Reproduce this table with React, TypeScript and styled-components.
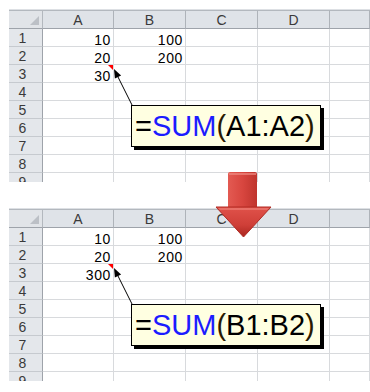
import React from 'react';
import styled, { createGlobalStyle } from 'styled-components';

const GlobalStyle = createGlobalStyle`
  html, body {
    margin: 0;
    padding: 0;
    background: #ffffff;
  }
`

const columns = ['A', 'B', 'C', 'D', ''];
const rowCount = 9;

const Page = styled.div`
  position: relative;
  width: 370px;
  height: 392px;
  overflow: hidden;
  box-sizing: border-box;
  padding: 9px 0 0 9px;
  display: flex;
  flex-direction: column;
  gap: 26px;
  background: #ffffff;
  font-family: "Liberation Sans", Arial, sans-serif;
`

const Sheet = styled.div`
  position: relative;
  height: 172px;
  overflow: hidden;
  border-top: 1px solid #dde0e4;
  display: grid;
  grid-template-columns: 34px 71px 72px 72px 72px 1fr;
  grid-template-rows: 19px;
  grid-auto-rows: 18px;
  background: #ffffff;
`

const Corner = styled.div`
  position: relative;
  box-sizing: border-box;
  background: #e1e4e8;
  border-top: 1px solid #b3b8be;
  border-bottom: 1px solid #9ea3aa;
  border-right: 1px solid #b3b8be;

  &::after {
    content: '';
    position: absolute;
    right: 3px;
    bottom: 3px;
    border-left: 9px solid transparent;
    border-bottom: 9px solid #bcc0c6;
  }
`

const ColHead = styled.div`
  box-sizing: border-box;
  background: #dfe3e8;
  border-top: 1px solid #b3b8be;
  border-bottom: 1px solid #9ea3aa;
  border-right: 1px solid #aeb3b9;
  display: flex;
  align-items: center;
  justify-content: center;
  font-size: 14px;
  color: #3a3a3a;
`

const RowHead = styled.div`
  box-sizing: border-box;
  background: #e4e7eb;
  border-bottom: 1px solid #c6cacf;
  border-right: 1px solid #9ea3aa;
  display: flex;
  align-items: center;
  justify-content: center;
  padding-right: 6px;
  font-size: 14px;
  color: #3a3a3a;
`

const Cell = styled.div<{ $flag?: boolean }>`
  position: relative;
  box-sizing: border-box;
  border-right: 1px solid #d8dadd;
  border-bottom: 1px solid #d8dadd;
  display: flex;
  align-items: flex-end;
  justify-content: flex-end;
  padding-right: 2px;
  font-size: 14px;
  line-height: 11px;
  letter-spacing: 0.6px;
  color: #000000;

  &::after {
    content: '';
    display: ${ ({ $flag }) => $flag ? 'block' : 'none' };
    position: absolute;
    top: 0;
    right: 0;
    border-left: 5px solid transparent;
    border-top: 5px solid #ff0000;
  }
`

const Leader = styled.svg`
  position: absolute;
  left: 0;
  top: 0;
  width: 370px;
  height: 172px;
  pointer-events: none;
`

const Callout = styled.div`
  position: absolute;
  left: 122px;
  top: 95px;
  width: 190px;
  height: 42px;
  box-sizing: border-box;
  border: 1px solid #000000;
  background: #ffffe1;
  box-shadow: 3px 3px 0 #000000;
  display: flex;
  align-items: center;
  padding-left: 3px;
  font-size: 29px;
  color: #000000;
  white-space: nowrap;
`

const Fn = styled.span`
  color: #1c1cff;
`

const Paren = styled.span`
  color: #2a1a00;
`

const BigArrow = styled.svg`
  position: absolute;
  left: 215px;
  top: 172px;
  width: 57px;
  height: 66px;
`

type SheetProps = {
  values: Record<string, string>;
  formula: string;
}

function Spreadsheet ({ values, formula }: SheetProps) {
  const rows = Array.from({ length: rowCount }, (_, i) => i + 1);
  return (
    <Sheet>
      <Corner />
      {columns.map((c, i) => <ColHead key={ 'h' + i }>{ c }</ColHead>)}
      {rows.map(r => (
        <React.Fragment key={ r }>
          <RowHead>{ r }</RowHead>
          {columns.map((c, i) => (
            <Cell key={ i } $flag={ c === 'A' && r === 3 }>
              { values[c + r] }
            </Cell>
          ))}
        </React.Fragment>
      ))}
      <Leader viewBox="0 0 370 172">
        <line x1="107" y1="63" x2="123" y2="95" stroke="#000" strokeWidth="1" />
        <polygon points="105,59 105.9,68.6 112.1,65.4" fill="#000" />
      </Leader>
      <Callout>
        =<Fn>SUM</Fn><Paren>(</Paren>{ formula }<Paren>)</Paren>
      </Callout>
    </Sheet>
  )
}

export default function App () {
  return (
    <>
      <GlobalStyle />
      <Page>
        <Spreadsheet
          values={{ A1: '10', B1: '100', A2: '20', B2: '200', A3: '30' }}
          formula="A1:A2"
        />
        <Spreadsheet
          values={{ A1: '10', B1: '100', A2: '20', B2: '200', A3: '300' }}
          formula="B1:B2"
        />
        <BigArrow viewBox="0 0 57 66">
          <defs>
            <linearGradient id="shaft" x1="0" y1="0" x2="1" y2="0">
              <stop offset="0" stopColor="#e35a52" />
              <stop offset="0.5" stopColor="#d8463f" />
              <stop offset="1" stopColor="#bf342d" />
            </linearGradient>
            <linearGradient id="head" x1="0" y1="0" x2="0" y2="1">
              <stop offset="0" stopColor="#e0524a" />
              <stop offset="0.6" stopColor="#cf3f38" />
              <stop offset="1" stopColor="#a9261f" />
            </linearGradient>
          </defs>
          <path d="M13 2 Q13 0 15 0 L40 0 Q42 0 42 2 L42 36 L13 36 Z" fill="url(#shaft)" />
          <path d="M1 35 L56 35 L28.5 65 Z" fill="url(#head)" stroke="#b02a23" strokeWidth="1" strokeLinejoin="round" />
          <path d="M14 1 L41 1 L41 3 L14 3 Z" fill="#ee8a82" opacity="0.7" />
          <path d="M3 36 L54 36 L52 38 L5 38 Z" fill="#ec7d75" opacity="0.7" />
        </BigArrow>
      </Page>
    </>
  )
}
